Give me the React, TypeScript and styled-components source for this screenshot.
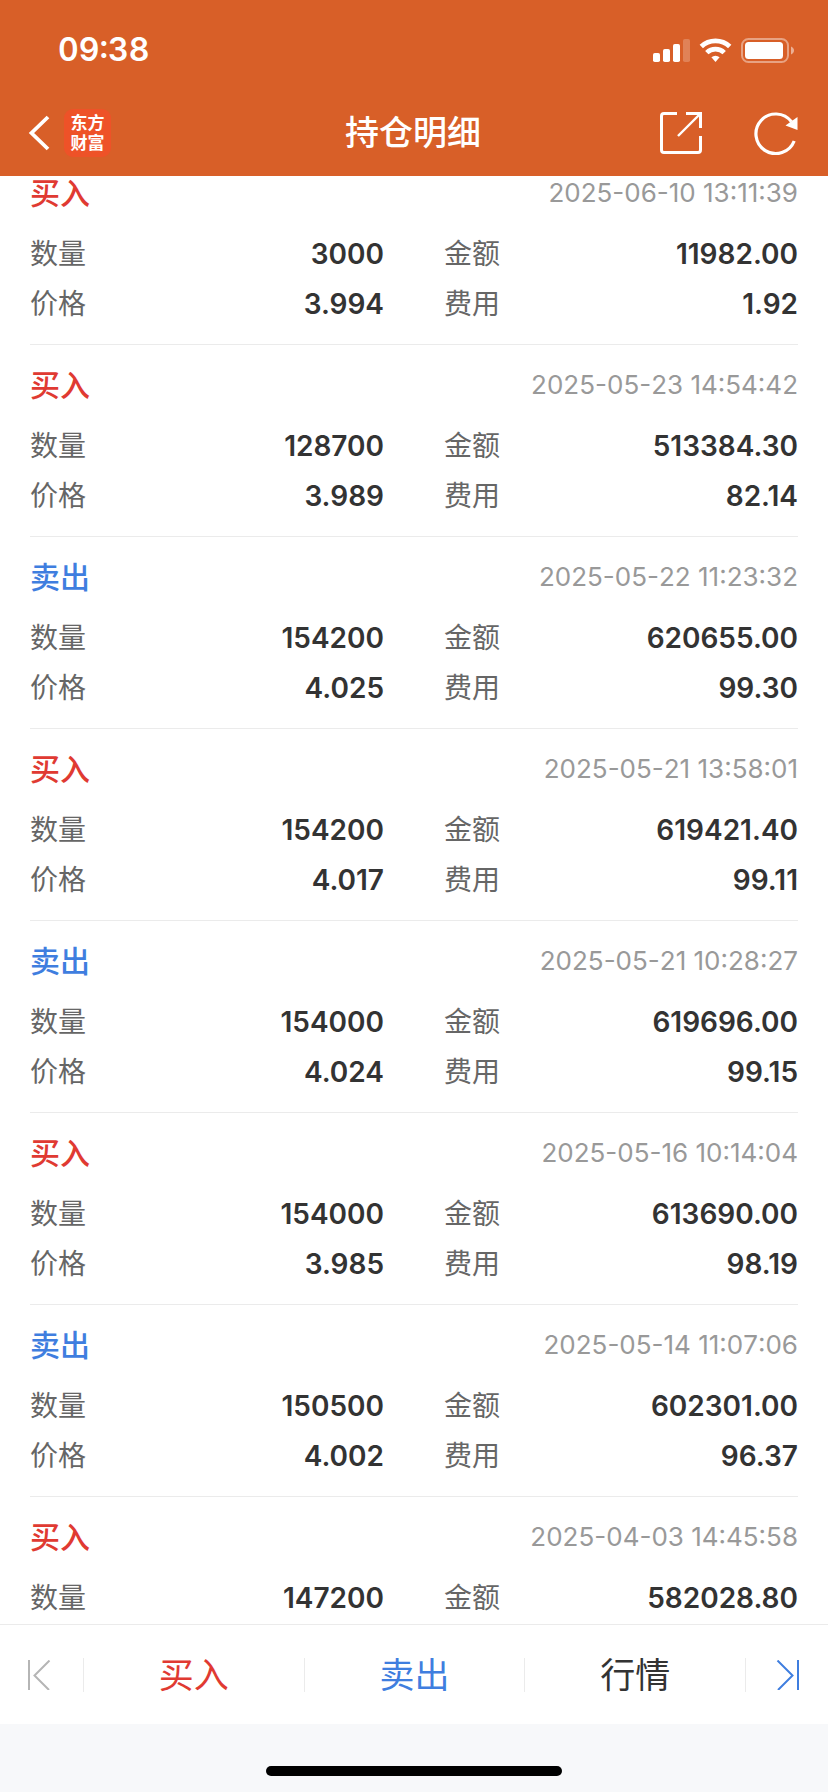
import React, { useLayoutEffect, useRef } from "react";
import styled, { createGlobalStyle } from "styled-components";

const color = {
  brand: "#d85f28",
  logo: "#ee5228",
  buy: "#e03a32",
  sell: "#3f7edf",
  text: "#333333",
  label: "#666666",
  muted: "#999999",
  disabled: "#b5b5b5",
  line: "#ebebeb",
  safeArea: "#f7f8fa",
};

const GlobalStyle = createGlobalStyle`
  *, *::before, *::after { box-sizing: border-box; }
  body {
    margin: 0;
    background: #ffffff;
    color: ${color.text};
    font-family: Inter, "Noto Sans CJK SC", sans-serif;
  }
  button { font: inherit; margin: 0; padding: 0; border: 0; background: none; cursor: pointer; }
  svg { display: block; }
`;

const Screen = styled.div`
  display: flex;
  flex-direction: column;
  height: 100vh;
`;

const Header = styled.header`
  flex: none;
  background: ${color.brand};
  color: #ffffff;
`;

const StatusBar = styled.div`
  display: flex;
  align-items: center;
  justify-content: space-between;
  height: 90px;
  padding: 10px 34px 0 58px;
`;

const Clock = styled.time`
  font-size: 32px;
  line-height: 40px;
  font-weight: 600;
  font-feature-settings: "tnum", "case";
`;

const NavBar = styled.div`
  display: grid;
  grid-template-columns: 1fr auto 1fr;
  align-items: center;
  height: 86px;
  padding: 0 30px 0 28px;
`;

const NavGroup = styled.div<{ $end?: boolean }>`
  display: flex;
  align-items: center;
  justify-content: ${(p) => (p.$end ? "flex-end" : "flex-start")};
  gap: ${(p) => (p.$end ? "52px" : "14px")};
`;

const IconButton = styled.button`
  display: flex;
  align-items: center;
  justify-content: center;
  color: inherit;
`;

const Logo = styled.span`
  width: 47px;
  padding: 4px 6px;
  border-radius: 9px;
  background: ${color.logo};
  font-size: 17px;
  line-height: 20px;
  font-weight: 700;
  text-align: center;
`;

const Title = styled.h1`
  margin: 0;
  font-size: 34px;
  line-height: 40px;
  font-weight: 500;
`;

const RecordList = styled.main`
  flex: 1;
  min-height: 0;
  overflow-y: auto;
  scrollbar-width: none;
  padding: 0 30px;
  &::-webkit-scrollbar { display: none; }
`;

const Record = styled.article`
  padding: 20px 0 15px;
  border-bottom: 1px solid ${color.line};
`;

const RecordHead = styled.div`
  display: flex;
  align-items: center;
  justify-content: space-between;
  height: 40px;
  margin-bottom: 16px;
`;

const Side = styled.h2<{ $side: Trade }>`
  margin: 0;
  font-size: 30px;
  line-height: 40px;
  font-weight: 500;
  color: ${(p) => (p.$side === "买入" ? color.buy : color.sell)};
`;

const Stamp = styled.time`
  font-size: 26px;
  line-height: 40px;
  font-kerning: none;
  color: ${color.muted};
`;

const Fields = styled.dl`
  display: grid;
  grid-template-columns: 1fr 1fr;
  column-gap: 60px;
  margin: 0;
`;

const Field = styled.div`
  display: flex;
  align-items: center;
  justify-content: space-between;
  height: 50px;
`;

const FieldName = styled.dt`
  font-size: 28px;
  line-height: 40px;
  color: ${color.label};
`;

const FieldValue = styled.dd`
  margin: 0;
  font-size: 28px;
  line-height: 40px;
  font-weight: 600;
`;

const ActionBar = styled.nav`
  flex: none;
  display: grid;
  grid-template-columns: 84px 1fr 1fr 1fr 82px;
  align-items: center;
  height: 100px;
  border-top: 1px solid ${color.line};
`;

const Action = styled.button<{ $color: string }>`
  display: flex;
  align-items: center;
  justify-content: center;
  height: 34px;
  font-size: 35px;
  line-height: 34px;
  color: ${(p) => p.$color};
  && { border-right: 1px solid ${color.line}; }
  &&:last-child { border-right: 0; }
`;

const EdgeAction = styled(Action)<{ $end?: boolean }>`
  justify-content: ${(p) => (p.$end ? "flex-end" : "flex-start")};
  && { padding: 0 28px; }
`;

const SafeArea = styled.footer`
  flex: none;
  display: flex;
  align-items: flex-end;
  justify-content: center;
  height: 68px;
  padding-bottom: 16px;
  background: ${color.safeArea};
`;

const HomeIndicator = styled.div`
  width: 296px;
  height: 10px;
  border-radius: 5px;
  background: #000000;
`;

type Trade = "买入" | "卖出";

interface Entry {
  side: Trade;
  time: string;
  fields: [string, string][];
}

const entry = (
  side: Trade, time: string, count: string, amount: string, price?: string, fee?: string,
): Entry => ({
  side,
  time,
  fields: [
    ["数量", count],
    ["金额", amount],
    ...(price && fee ? ([["价格", price], ["费用", fee]] as [string, string][]) : []),
  ],
});

const entries: Entry[] = [
  entry("买入", "2025-06-10 13:11:39", "3000", "11982.00", "3.994", "1.92"),
  entry("买入", "2025-05-23 14:54:42", "128700", "513384.30", "3.989", "82.14"),
  entry("卖出", "2025-05-22 11:23:32", "154200", "620655.00", "4.025", "99.30"),
  entry("买入", "2025-05-21 13:58:01", "154200", "619421.40", "4.017", "99.11"),
  entry("卖出", "2025-05-21 10:28:27", "154000", "619696.00", "4.024", "99.15"),
  entry("买入", "2025-05-16 10:14:04", "154000", "613690.00", "3.985", "98.19"),
  entry("卖出", "2025-05-14 11:07:06", "150500", "602301.00", "4.002", "96.37"),
  entry("买入", "2025-04-03 14:45:58", "147200", "582028.80"),
];

const StatusIcons = () => (
  <svg width="141" height="25" viewBox="0 0 141 25" fill="currentColor" aria-hidden="true">
    <rect x="0" y="15" width="7" height="9" rx="1.8" />
    <rect x="10" y="11" width="7" height="13" rx="1.8" />
    <rect x="20" y="6" width="7" height="18" rx="1.8" />
    <rect x="30" y="1" width="7" height="23" rx="1.8" opacity="0.22" />
    <g fill="none" stroke="currentColor" strokeWidth="4.8">
      <path d="M48.3 8.6A20.5 20.5 0 0 1 76.7 8.6" />
      <path d="M53.8 14.6A12.5 12.5 0 0 1 71.2 14.6" />
    </g>
    <path d="M58.4 19.2A6.2 6.2 0 0 1 66.6 19.2L62.5 24Z" />
    <rect x="89" y="1" width="46" height="23" rx="6.5" fill="none" stroke="currentColor" strokeWidth="2" opacity="0.42" />
    <rect x="92" y="4" width="38" height="17" rx="3.5" />
    <path d="M138 8.5C142 10 142 15 138 16.5Z" opacity="0.5" />
  </svg>
);

const BackIcon = () => (
  <svg width="22" height="36" viewBox="0 0 22 36" fill="none" stroke="currentColor" strokeWidth="3.8" aria-hidden="true">
    <path d="M20 2L3.5 18L20 34" />
  </svg>
);

const ShareIcon = () => (
  <svg width="42" height="42" viewBox="0 0 42 42" fill="none" stroke="currentColor" strokeWidth="3" aria-hidden="true">
    <path d="M17 1.5H4Q1.5 1.5 1.5 4V38Q1.5 40.5 4 40.5H38Q40.5 40.5 40.5 38V24" />
    <path d="M26 1.5H40.5V16" />
    <path d="M39 3L18 24" strokeWidth="2.4" />
  </svg>
);

const RefreshIcon = () => (
  <svg width="44" height="43" viewBox="0 0 44 43" fill="none" stroke="currentColor" strokeWidth="3.2" aria-hidden="true">
    <path d="M40.2 29A19.8 19.8 0 1 1 37.5 9.8" />
    <path d="M43.5 5V18L31.5 13.5Z" fill="currentColor" stroke="none" />
  </svg>
);

const FirstIcon = () => (
  <svg width="24" height="30" viewBox="0 0 24 30" fill="none" stroke="currentColor" strokeWidth="2" aria-hidden="true">
    <path d="M1 0V30" />
    <path d="M21.5 0.5L6.5 15.5L21 30" />
  </svg>
);

const LastIcon = () => (
  <svg width="24" height="30" viewBox="0 0 24 30" fill="none" stroke="currentColor" strokeWidth="2" aria-hidden="true">
    <path d="M22 0V30" />
    <path d="M1.5 0.5L16.5 15.5L2 30" />
  </svg>
);

export default function App() {
  const list = useRef<HTMLElement>(null);

  // Open the list with the first record's top padding scrolled away.
  useLayoutEffect(() => {
    if (list.current) list.current.scrollTop = 23;
  }, []);

  return (
    <>
      <GlobalStyle />
      <Screen>
        <Header>
          <StatusBar>
            <Clock>09:38</Clock>
            <StatusIcons />
          </StatusBar>
          <NavBar>
            <NavGroup>
              <IconButton aria-label="返回"><BackIcon /></IconButton>
              <Logo>东方<br />财富</Logo>
            </NavGroup>
            <Title>持仓明细</Title>
            <NavGroup $end>
              <IconButton aria-label="分享"><ShareIcon /></IconButton>
              <IconButton aria-label="刷新"><RefreshIcon /></IconButton>
            </NavGroup>
          </NavBar>
        </Header>
        <RecordList ref={list}>
          {entries.map((e) => (
            <Record key={e.time}>
              <RecordHead>
                <Side $side={e.side}>{e.side}</Side>
                <Stamp>{e.time}</Stamp>
              </RecordHead>
              <Fields>
                {e.fields.map(([name, value]) => (
                  <Field key={name}>
                    <FieldName>{name}</FieldName>
                    <FieldValue>{value}</FieldValue>
                  </Field>
                ))}
              </Fields>
            </Record>
          ))}
        </RecordList>
        <ActionBar>
          <EdgeAction $color={color.disabled} aria-label="上一个"><FirstIcon /></EdgeAction>
          <Action $color={color.buy}>买入</Action>
          <Action $color={color.sell}>卖出</Action>
          <Action $color={color.text}>行情</Action>
          <EdgeAction $end $color={color.sell} aria-label="下一个"><LastIcon /></EdgeAction>
        </ActionBar>
        <SafeArea>
          <HomeIndicator />
        </SafeArea>
      </Screen>
    </>
  );
}
